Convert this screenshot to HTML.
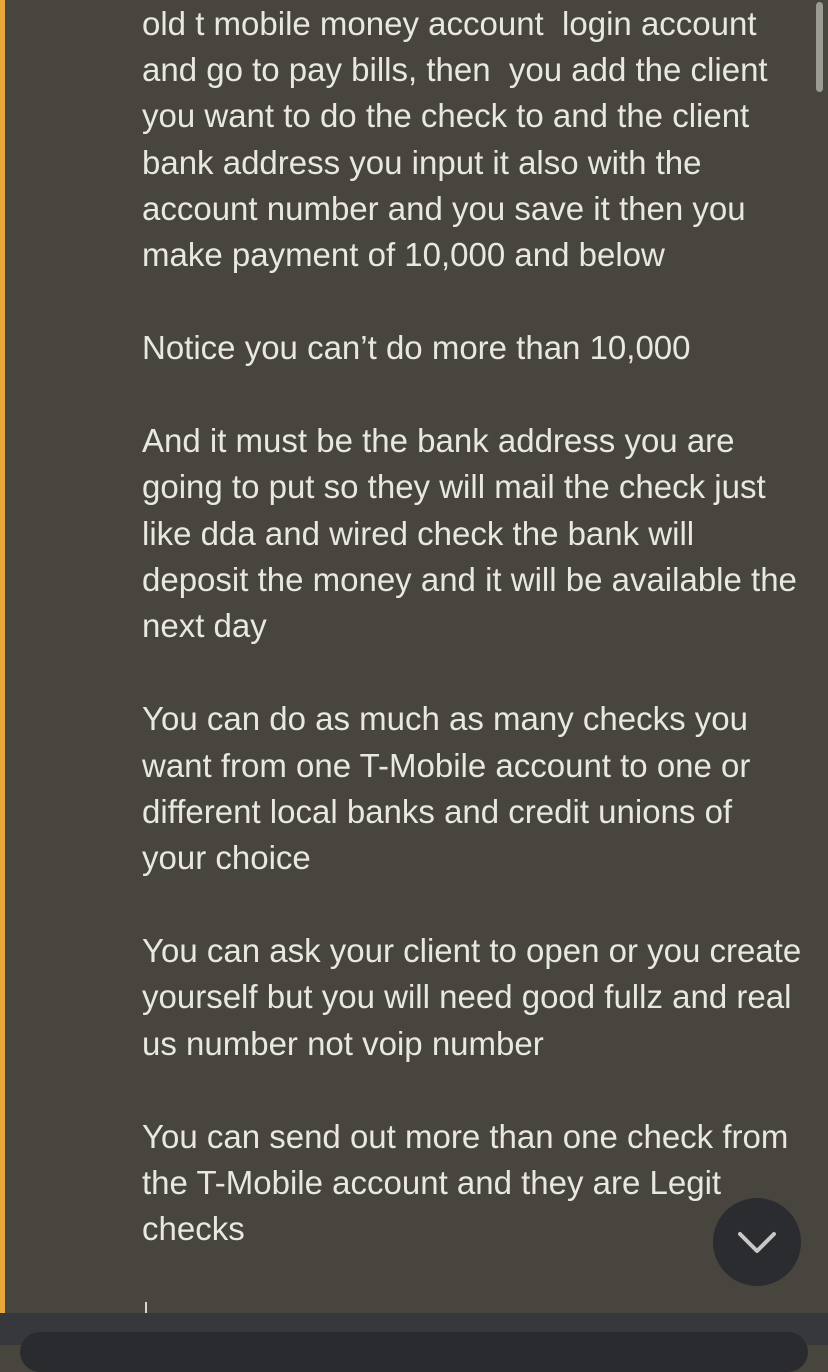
<!DOCTYPE html>
<html><head><meta charset="utf-8"><style>
html,body{margin:0;padding:0;}
body{width:828px;height:1345px;position:relative;overflow:hidden;background:#48453f;font-family:"Liberation Sans",sans-serif;}
.bar{position:absolute;left:0;top:0;width:5px;height:1313px;background:#e8a93a;}
.txt{position:absolute;left:142px;top:0.5px;font-size:33px;line-height:46.38px;color:#e9e7e2;white-space:pre;}
.sb{position:absolute;left:816px;top:2px;width:7px;height:90px;border-radius:4px;background:#9c9a95;}
.btn{position:absolute;left:713px;top:1198px;width:88px;height:88px;border-radius:50%;background:#2b2c2f;}
.foot{position:absolute;left:0;top:1313px;width:828px;height:32px;background:#36383c;}
.inp{position:absolute;left:20px;top:1332px;width:788px;height:40px;border-radius:20px;background:#2a2b2f;}
.cur{position:absolute;left:145px;top:1302px;width:2px;height:11px;background:#d8d6d0;}
</style></head><body>
<div class="bar"></div>
<div class="txt">old t mobile money account  login account
and go to pay bills, then  you add the client
you want to do the check to and the client
bank address you input it also with the
account number and you save it then you
make payment of 10,000 and below

Notice you can’t do more than 10,000

And it must be the bank address you are
going to put so they will mail the check just
like dda and wired check the bank will
deposit the money and it will be available the
next day

You can do as much as many checks you
want from one T-Mobile account to one or
different local banks and credit unions of
your choice

You can ask your client to open or you create
yourself but you will need good fullz and real
us number not voip number

You can send out more than one check from
the T-Mobile account and they are Legit
checks</div>
<div class="cur"></div>
<div class="sb"></div>
<div class="btn"><svg width="88" height="88" viewBox="0 0 88 88"><path d="M27 36 L44 53 L61 36" fill="none" stroke="#c9c8c6" stroke-width="4" stroke-linecap="round" stroke-linejoin="round"/></svg></div>
<div class="foot"></div>
<div class="inp"></div>
</body></html>
